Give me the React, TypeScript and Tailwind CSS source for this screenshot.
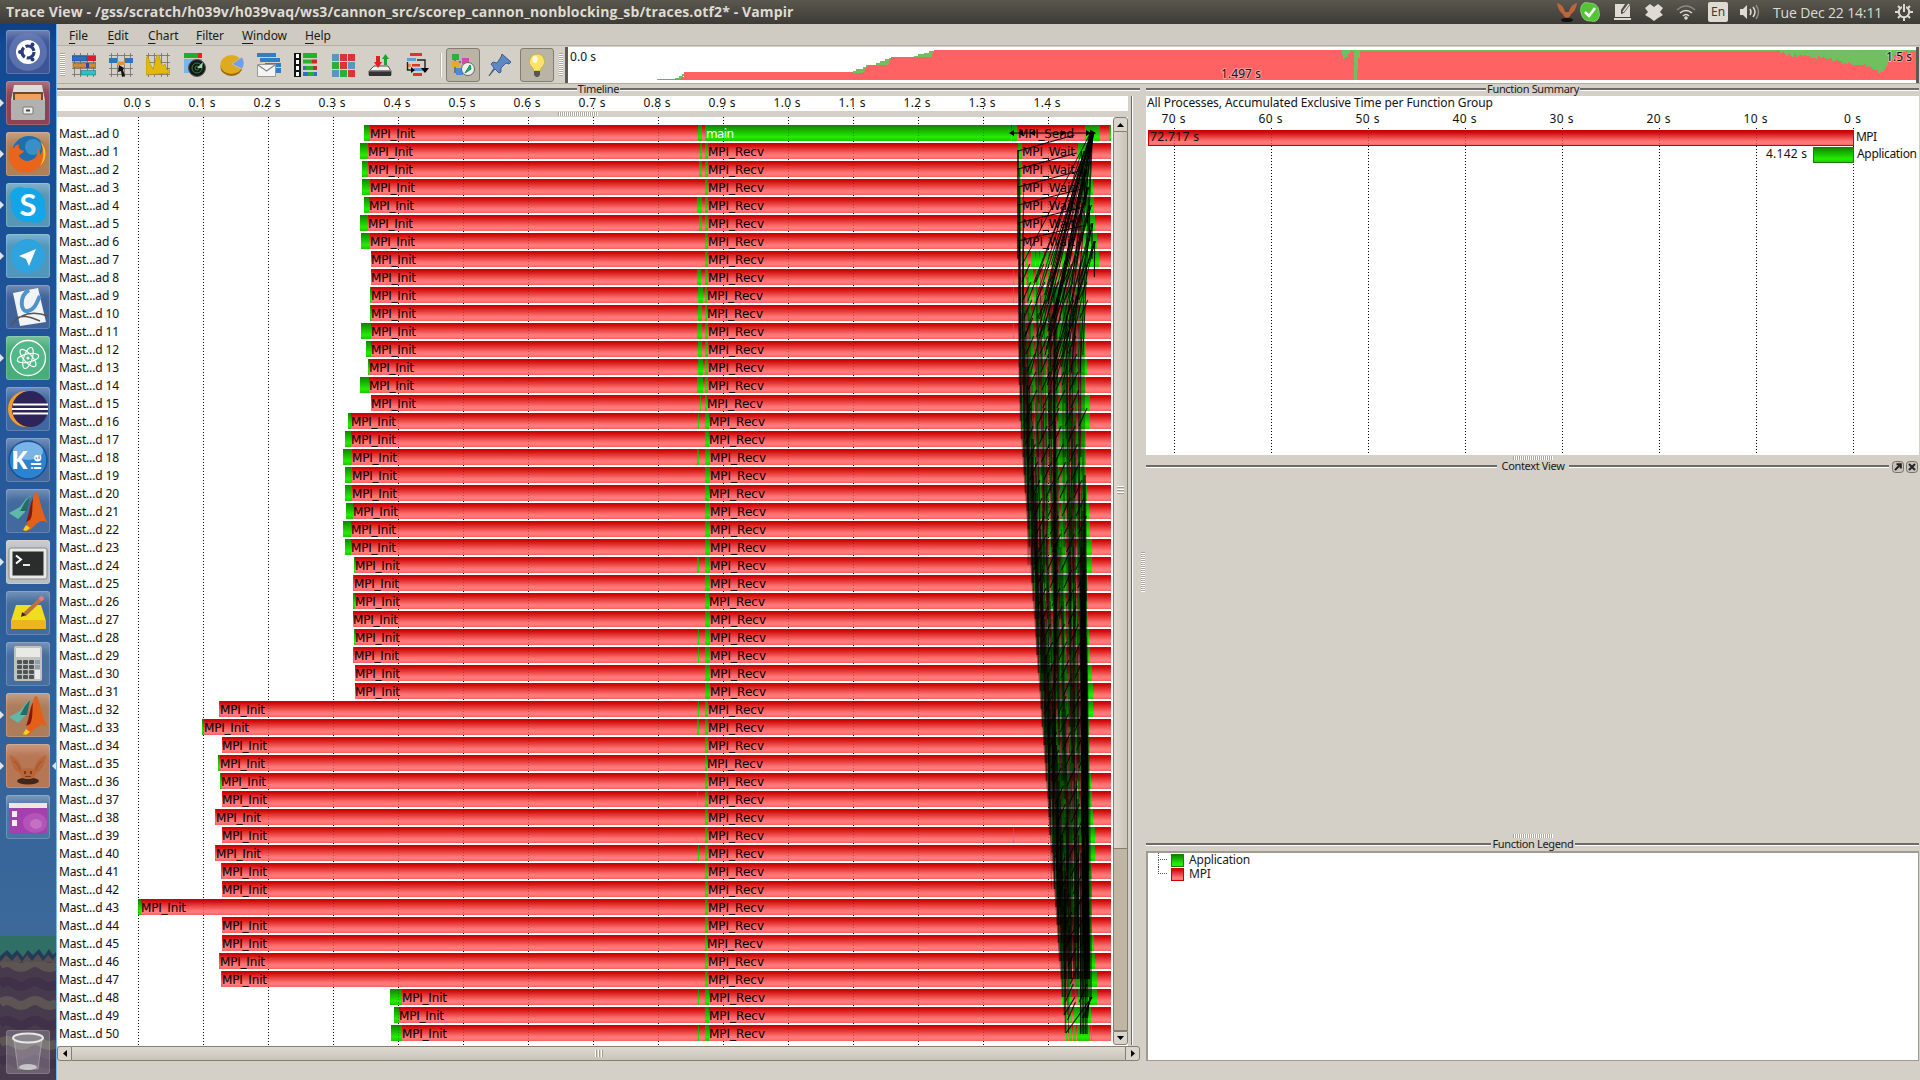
import React from "react";

const UI = "font-['Noto_Sans','Open_Sans',sans-serif]";

/* ---------- deterministic noise for dense trace regions ---------- */
function rng(seed: number) {
  let s = seed;
  return () => {
    s = (s * 1664525 + 1013904223) % 4294967296;
    return s / 4294967296;
  };
}

/* ---------- timeline data: [start, init, midStart, midEnd, recv] ---------- */
const rows: number[][] = [
  [364, 370, 698, 702, 705], [360, 368, 700, 702, 708], [362, 368, 699, 702, 708], [362, 370, 0, 0, 708],
  [364, 369, 697, 702, 708], [360, 368, 699, 702, 708], [361, 370, 0, 0, 708], [371, 371, 0, 0, 708],
  [371, 371, 697, 701, 708], [370, 371, 698, 703, 707], [370, 371, 698, 702, 707], [361, 371, 697, 702, 708],
  [366, 371, 698, 702, 708], [368, 369, 698, 703, 708], [360, 369, 697, 703, 708], [371, 371, 700, 701, 707],
  [348, 351, 698, 699, 709], [345, 351, 0, 0, 709], [343, 352, 697, 699, 710], [345, 352, 0, 0, 710],
  [345, 352, 0, 0, 709], [346, 353, 0, 0, 710], [343, 351, 0, 0, 710], [345, 351, 0, 0, 710],
  [354, 355, 697, 699, 710], [353, 354, 0, 0, 710], [353, 355, 0, 0, 709], [353, 353, 0, 0, 710],
  [354, 355, 698, 699, 710], [353, 354, 698, 699, 710], [355, 355, 0, 0, 710], [355, 355, 0, 0, 710],
  [219, 220, 698, 699, 708], [202, 204, 697, 699, 708], [222, 222, 0, 0, 708], [218, 220, 0, 0, 707],
  [220, 221, 0, 0, 708], [222, 222, 697, 698, 708], [215, 216, 0, 0, 708], [222, 222, 0, 0, 708],
  [215, 216, 698, 699, 708], [221, 222, 0, 0, 708], [222, 222, 0, 0, 708], [138, 141, 0, 0, 708],
  [222, 222, 0, 0, 708], [222, 222, 0, 0, 707], [219, 220, 0, 0, 708], [221, 222, 0, 0, 708],
  [390, 402, 698, 699, 709], [394, 399, 0, 0, 709], [391, 402, 698, 699, 709],
];
const tail = [
  1100, 1089, 1091, 1093, 1094, 1095, 1097, 1099, 1088, 1086, 1085, 1085, 1086, 1087, 1086, 1090, 1090, 1086, 1086,
  1086, 1087, 1089, 1090, 1092, 1092, 1088, 1088, 1088, 1089, 1090, 1092, 1093, 1093, 1089, 1089, 1089, 1091, 1092,
  1093, 1095, 1095, 1092, 1092, 1092, 1092, 1094, 1095, 1097, 1097, 1091, 1092,
];
const leftAt = (r: number) => (r < 16 ? 1018 + r * 0.1 : 1020 + (r - 16) * 1.32);
const rowTop = (r: number) => 125 + 18 * r;
const rowMid = (r: number) => 133 + 18 * r;

function stripes() {
  const out: { x: number; w: number; y: number }[] = [];
  const rand = rng(77);
  for (let r = 7; r < 49; r++) {
    const x0 = Math.round(leftAt(r)) + 2;
    let x = x0;
    while (x < 1082) {
      const w = 1 + Math.floor(rand() * 5);
      out.push({ x, w, y: rowTop(r) });
      x += w + 1 + Math.floor(rand() * 4);
    }
    out.push({ x: 1062, w: 3, y: rowTop(r) });
    out.push({ x: 1082, w: tail[r] - 1082, y: rowTop(r) });
  }
  return out.filter((s) => s.w > 0);
}

type Ln = [number, number, number, number, number, number];
function messages(): Ln[] {
  const L: Ln[] = [];
  const rand = rng(4242);
  // left frontier: a vertical step per receiving rank
  for (let r = 9; r < 51; r++) {
    const from = Math.max(1, r - 7);
    const x = Math.round(leftAt(r)) + 0.5;
    L.push([x, rowMid(from), x, rowMid(r), 1.6, 0.55]);
    L.push([x + 4, rowMid(from) + 18, x + 3, rowMid(r), 1, 0.5]);
  }
  // shallow links between neighbouring ranks
  for (let r = 1; r < 7; r++) {
    L.push([1018, rowMid(r), 1072 + r * 2.4, rowMid(r - 1) + 2, 1.2, 0.95]);
    L.push([1018, rowMid(r) - 1, 1018, rowMid(r) + 18, 1.5, 0.9]);
  }
  // fan converging on rank 0
  for (let k = 0; k < 22; k++) {
    const tx = 1094 - rand() * 4;
    const bx = 1022 + k * 2.9;
    L.push([tx, 133, bx, rowMid(7 + Math.floor(rand() * 7)) + 6, 1, 0.8]);
  }
  for (let r = 1; r < 7; r++) {
    for (let k = 0; k < 4; k++) {
      const tx = 1079 + r * 2.4 + rand() * 3;
      L.push([tx, rowMid(r), tx - 26 - rand() * 24, rowMid(r + 8), 1, 0.75]);
    }
    L.push([1079 + r * 2.6, rowMid(r), 1080 + r * 2.4, rowMid(r + 2), 1.2, 0.85]);
  }
  // steep translucent links, about eight ranks down
  for (let r = 8; r < 45; r++) {
    const a = leftAt(r) + 6;
    const cols = [0.04, 0.16, 0.27, 0.4, 0.47, 0.53, 0.72, 0.8, 0.87, 0.97];
    cols.forEach((c) => {
      const x = Math.round(a + (1080 - a) * c + (rand() - 0.5) * 6) + 0.5;
      const to = Math.min(47, r + 4 + Math.floor(rand() * 5));
      L.push([x, rowMid(r), x + Math.round((1 - c) * 2), rowMid(to), rand() > 0.5 ? 2 : 1, 0.3]);
    });
    if (r < 34) {
      L.push([1053.5 + Math.floor(rand() * 3), rowMid(r), 1054.5, rowMid(r + 4), 2, 0.4]);
    }
  }
  // short diagonals stepping one rank up
  for (let r = 8; r < 50; r++) {
    const off = (r % 8) * 0.9;
    for (let x = leftAt(r) + 3 + off; x < 1080; x += 14) {
      L.push([x, rowMid(r) + 5, x + 8, rowMid(r - 1) + 5, 1.1, 0.8]);
    }
  }
  // dense right-hand bundle
  for (let r = 19; r < 43; r++) {
    const n = r > 24 ? 4 : 2;
    for (let k = 0; k < n; k++) {
      const x = 1080 + rand() * 6 + (r - 24) * 0.13;
      L.push([x, rowMid(r), x + 1.2, rowMid(Math.min(47, r + 7)), 1.6, 0.5]);
    }
  }
  for (let k = 0; k < 5; k++) {
    L.push([1081 + k * 1.6, rowMid(40), 1080.5 + k * 1.6, rowMid(50) + 1, 1.2, 0.85]);
    L.push([1092 - k * 0.6, rowMid(48), 1082 + k * 1.4, rowMid(49) + 3, 1, 0.85]);
  }
  L.push([1092, rowMid(48), 1066, rowMid(50), 1.1, 0.9]);
  L.push([1075, rowMid(48), 1064, rowMid(49), 1.1, 0.9]);
  return L;
}
const GREEN = stripes();
const LINES = messages();

function Label({ x, y, w, t, fill = "#000" }: { x: number; y: number; w: number; t: string; fill?: string }) {
  return (
    <text x={x} y={y} textLength={w} fill={fill} fontSize="12" fontFamily="'DejaVu Sans', sans-serif">
      {t}
    </text>
  );
}

function TimelineChart() {
  return (
    <svg width="1056" height="929" viewBox="57 117 1056 929" className="block shrink-0 bg-white">
      <defs>
        <linearGradient id="red" x1="0" y1="0" x2="0" y2="1">
          <stop offset="0" stopColor="#cc0000" />
          <stop offset="0.12" stopColor="#d00808" />
          <stop offset="0.72" stopColor="#ff7676" />
          <stop offset="0.85" stopColor="#ff7a7a" />
          <stop offset="1" stopColor="#f65f5f" />
        </linearGradient>
        <linearGradient id="green" x1="0" y1="0" x2="0" y2="1">
          <stop offset="0" stopColor="#128200" />
          <stop offset="0.75" stopColor="#22ee00" />
          <stop offset="1" stopColor="#1fc800" />
        </linearGradient>
      </defs>
      <g shapeRendering="crispEdges">
        {Array.from({ length: 15 }, (_, k) => (
          <line key={k} x1={138.5 + 65 * k} x2={138.5 + 65 * k} y1="117" y2="1046" stroke="#000" strokeDasharray="1 2" />
        ))}
        {rows.map((d, r) => (
          <g key={r}>
            <rect x={d[0]} y={rowTop(r)} width={1111 - d[0]} height="16" fill="url(#red)" />
            <rect x={d[0]} y={rowTop(r)} width={d[1] - d[0]} height="16" fill="url(#green)" />
            {d[2] > 0 && <rect x={d[2]} y={rowTop(r)} width={d[3] - d[2]} height="16" fill="url(#green)" />}
            <rect x="705" y={rowTop(r)} width={r === 0 ? 306 : d[4] - 705} height="16" fill="url(#green)" />
          </g>
        ))}
        <rect x="1012" y="125" width="5" height="16" fill="url(#green)" />
        <rect x="1085" y="125" width="15" height="16" fill="url(#green)" />
        <rect x="1109" y="125" width="2" height="16" fill="url(#green)" />
        {[1, 2, 3, 4, 5, 6].map((r) => (
          <g key={r} fill="url(#green)">
            <rect x="1018" y={rowTop(r)} width="4" height="16" />
            <rect x={1077 + r} y={rowTop(r)} width={tail[r] - 1077 - r} height="16" />
          </g>
        ))}
        {[8, 9, 11, 39].map((r) => (
          <rect key={r} x="1013" y={rowTop(r)} width="1" height="16" fill="url(#green)" />
        ))}
        {GREEN.map((s, i) => (
          <rect key={i} x={s.x} y={s.y} width={s.w} height="16" fill="url(#green)" />
        ))}
        <g fill="url(#green)">
          <rect x="1066" y={rowTop(49)} width="2" height="16" />
          <rect x="1070" y={rowTop(49)} width="2" height="16" />
          <rect x="1074" y={rowTop(49)} width="17" height="16" />
          <rect x="1066" y={rowTop(50)} width="2" height="16" />
          <rect x="1069" y={rowTop(50)} width="3" height="16" />
          <rect x="1073" y={rowTop(50)} width="3" height="16" />
          <rect x="1077" y={rowTop(50)} width="13" height="16" />
          <rect x="1091" y={rowTop(50)} width="1" height="16" />
        </g>
        {Array.from({ length: 15 }, (_, k) => (
          <line key={k} x1={138.5 + 65 * k} x2={138.5 + 65 * k} y1="117" y2="1046" stroke="#400" strokeOpacity="0.3" strokeDasharray="1 2" />
        ))}
      </g>
      {rows.map((d, r) => (
        <g key={r}>
          <text x="59" y={rowTop(r) + 13} textLength="60" fontSize="12" fill="#111" fontFamily="'Noto Sans', sans-serif">
            {r < 10 ? `Mast...ad ${r}` : `Mast...d ${r}`}
          </text>
          <Label x={d[1]} y={rowTop(r) + 13} w={45} t="MPI_Init" />
          {r > 0 && <Label x={d[4]} y={rowTop(r) + 13} w={56} t="MPI_Recv" />}
          {r > 0 && r < 7 && <Label x={1022} y={rowTop(r) + 13} w={53} t="MPI_Wait" />}
        </g>
      ))}
      <Label x={706} y={138} w={28} t="main" fill="#fff" />
      <Label x={1018} y={138} w={56} t="MPI_Send" />
      {/* overlapping message bundles */}
      <path fill="#000" fillOpacity="0.28" d="M1022 313L1084 259L1086 547L1092 997L1062 997L1042 727L1021 439Z" />
      <path fill="#000" fillOpacity="0.3" d="M1083 430L1086 547L1092 900V997H1080V550Z" />
      <g stroke="#000">
        {LINES.map((l, i) => (
          <line key={i} x1={l[0]} y1={l[1]} x2={l[2]} y2={l[3]} strokeWidth={l[4]} strokeOpacity={l[5]} />
        ))}
        <line x1="1011" x2="1094" y1="133" y2="133" />
      </g>
      <path d="M1009 133l5-3v6zM1018 133l5-3v6zM1030 133l5-3v6zM1066 133l-5-3v6zM1096 133l-6-3.5v7zM1091 133l-5-3v6z" />
    </svg>
  );
}

/* ---------- small chrome pieces ---------- */
function DockTitle({ t, lead, w, buttons }: { t: string; lead: string; w: string; buttons?: boolean }) {
  return (
    <div className="flex h-3 items-start text-[11px] leading-[10px] text-[#1a1a1a]">
      <div className={`mt-[4px] h-[3px] border-t-2 border-b border-t-[#6b6a66] border-b-white ${lead}`} />
      <div className={`flex justify-center whitespace-nowrap tracking-[-0.35px] ${w}`}>{t}</div>
      <div className="mt-[4px] h-[3px] flex-1 border-t-2 border-b border-t-[#6b6a66] border-b-white" />
      {buttons && (
        <div className="ml-[3px] mr-px flex gap-[2px]">
          <svg width="12" height="12" viewBox="0 0 12 12"><rect x=".5" y=".5" width="11" height="11" rx="3" fill="#c9c4b8" stroke="#77736a" /><path d="M3 9l4.5-4.5M4.5 3.2h4.3v4.3" stroke="#222" strokeWidth="2" fill="none" /></svg>
          <svg width="12" height="12" viewBox="0 0 12 12"><rect x=".5" y=".5" width="11" height="11" rx="3" fill="#c9c4b8" stroke="#77736a" /><path d="M3 3l6 6M9 3l-6 6" stroke="#222" strokeWidth="2" fill="none" /></svg>
        </div>
      )}
    </div>
  );
}
const GRIP_H = "h-[4px] w-10 bg-[repeating-linear-gradient(90deg,#aaa69a_0_1px,#fff_1px_2px)]";
const GRIP_V = "bg-[repeating-linear-gradient(180deg,#aaa69a_0_1px,#fff_1px_2px)]";

/* ---------- toolbar icons ---------- */
const grid = <path d="M2.500 0v24M8.500 0v24M15.500 0v24M21.500 0v24M0 2.500h24M0 9.500h24M0 15.500h24M0 21.500h24" stroke="#6f6c65" strokeWidth=".8" fill="none" />;
const toolIcons: React.ReactNode[] = [
  <>{grid}<path fill="#2e6fc6" stroke="#1f3f78" strokeWidth=".5" d="M0 3h15v5H0z" /><path fill="#d81f2c" d="M15 3h9v5h-9z" /><path fill="#c98a3a" stroke="#7a4f18" strokeWidth=".5" d="M1 10.500h23v4H1z" /><path fill="#234b9a" d="M14 10h3v5h-3z" /><path fill="#35bcc8" stroke="#0d6f78" strokeWidth=".5" d="M9 17.500h15v4.500H9z" /></>,
  <>{grid}<path fill="#2e74bf" d="M0 5h8v5H0zM16 5h8v5h-8z" /><path fill="#e0953c" d="M8 8.500h8v3.500H8z" /><path fill="#111" d="M10 12l5 3-1 2 2 6-3 1-1-6-3 1z" /></>,
  <>{grid}<path fill="#e4b90e" stroke="#b48c00" strokeWidth=".6" d="M0 22V5l2-2 2 8 3 5 2-7 2-7h2l2 8 2 3 2-2 2 6h3v3z" /></>,
  <><path fill="#1fae2c" d="M1 0h18v5H1z" /><path fill="#d92626" d="M15 0h4v5h-4z" /><path fill="#7ab4e8" d="M1 6h18v14H1z" /><circle cx="14" cy="15" r="8.500" fill="#111b14" stroke="#555" /><circle cx="14" cy="15" r="5" fill="none" stroke="#4a8a5a" strokeWidth=".8" /><circle cx="14" cy="15" r="2" fill="none" stroke="#4a8a5a" strokeWidth=".8" /><path d="M14 15l6-6-1 6z" fill="#9fd8b0" /></>,
  <><ellipse cx="11.500" cy="14" rx="11" ry="9" fill="#9a6a05" /><ellipse cx="11.500" cy="11.500" rx="11" ry="9.500" fill="#e0aa20" /><path d="M12 11l10-7q4 6 0 12z" fill="#6f9ef0" stroke="#d4d0c8" strokeWidth=".6" /></>,
  <><path fill="#2f7fc6" d="M0 0h19v4H0zM3 5h20v4H3zM8 10h16v4H8zM18 15h6v5h-6z" /><path fill="#f4f4f4" stroke="#999" d="M.5 11.500h18v12H.5z" /><path d="M1 12l8.500 6L18 12" fill="none" stroke="#888" strokeWidth="1.300" /></>,
  <><path fill="#111" d="M0 0h7v24H0z" /><path fill="#fff" d="M2 1h3v4H2zM2 7h3v4H2zM2 13h3v4H2zM2 19h3v4H2z" /><path fill="#23b32a" d="M9 0h14v5H9zM9 6.500h9v4H9zM12 13h7v4h-7zM14 19h6v4h-6z" /><path fill="#c92a2a" d="M18 6.500h5v4h-5zM19 13h4v4h-4z" /><path fill="#2f6fd0" d="M9 13h3v4H9zM9 19h5v4H9zM20 19h3v4h-3z" /></>,
  <><path fill="#5c94c4" d="M1 1h7v7H1zM17 9h7v7h-7zM1 17h7v7H1z" /><path fill="#d83535" d="M9 1h7v7H9zM17 1h7v7h-7zM9 9h7v7H9zM17 17h7v7h-7z" /><path fill="#2cae38" d="M1 9h7v7H1zM9 17h7v7H9z" /></>,
  <><path fill="#f0f0ee" stroke="#555" d="M6 13h14l3 5v4H1v-4z" /><path fill="#333" d="M1 18h22v5H1z" /><path fill="#888" d="M1 17h22v1.500H1z" /><path fill="#d22" d="M8 3h4v6h2l-4 6-4-6h2z" /><path fill="#1fa32c" d="M16 12V6h-2l3.500-5L21 6h-2v6z" /></>,
  <><path fill="#d33" d="M5 0h12v3H5zM7 11h8v2.500H7z" /><path fill="#5ba0d8" d="M2 5h9v3H2zM9 15h9v3H9z" /><path fill="#e0953c" d="M2 11h4v3H2z" /><path fill="#d33" d="M8 20h9v3H8z" /><path d="M12 7h8v10M2.500 9v8h4" fill="none" stroke="#222" strokeWidth="1.400" /><path d="M16 15h8l-4 5zM6 14v6l4-3z" /></>,
];
const treeIcon = <><path d="M4 2v18M4 9h6" stroke="#333" /><path fill="#2eae3a" d="M1 1h7v6H1z" /><path fill="#e8a830" d="M1 8h7v6H1z" /><path fill="#4a8ad8" d="M5 15h7v7H5z" /><path fill="#d04ab0" d="M11 5h7v6h-7z" /><circle cx="17" cy="16" r="6.500" fill="#eee" stroke="#666" /><path d="M14 20l5-8 1 4z" fill="#2b4" stroke="#186" /></>;
const pinIcon = <path fill="#5d88c4" stroke="#2d4a7a" strokeWidth=".8" d="M14 1l9 8-2 2-3-1-5 5v4l-2 1-4-4-6 7 5-8-3-4 2-2 4 1 4-6z" />;
const bulbIcon = <><path fill="#fbe36a" stroke="#c9a62c" strokeWidth=".8" d="M12 1a7.500 7.500 0 0 1 4.500 13.500L15 18H9l-1.500-3.500A7.500 7.500 0 0 1 12 1z" /><ellipse cx="10" cy="6.500" rx="2.500" ry="3.500" fill="#fffbe0" /><path fill="#555" d="M9 18h6v4l-2 2h-2l-2-2z" /></>;

function Ico({ children }: { children: React.ReactNode }) {
  return <svg width="24" height="24" viewBox="0 0 24 24" className="block">{children}</svg>;
}

/* ---------- launcher ---------- */
const matlab = <><path fill="#5fb8a8" d="M3 24l11-6 6-8 5-4-6 17-7 7z" /><path fill="#1f6f68" d="M14 22l5-9 5-6-3 15z" /><path fill="#e2601a" d="M18 41c4-3 3-12 7-22 2-8 3-17 5-16 3 0 6 23 12 31-6-5-11 0-16 5-3 3-5 3-8 2z" /><path fill="#8b1508" d="M20 33c3-6 3-15 7-24-1 10 0 17-3 22z" /><path fill="#f9d018" d="M17 41l3-5 4 3-4 3z" /></>;
type App = { bg: string; art: React.ReactNode; run?: boolean; active?: boolean };
const apps: App[] = [
  { bg: "bg-[#3c5598]", art: <><circle cx="22" cy="22" r="19" fill="#6f83bd" opacity=".6" /><circle cx="22" cy="22" r="12" fill="#fff" /><circle cx="22" cy="22" r="6" fill="none" stroke="#2b3d78" strokeWidth="3.200" strokeDasharray="10.500 2" /><circle cx="14" cy="22" r="2" fill="#2b3d78" /><circle cx="26.500" cy="14.500" r="2" fill="#2b3d78" /><circle cx="26.500" cy="29.500" r="2" fill="#2b3d78" /></> },
  { bg: "bg-[#8e4355]", run: true, art: <><path fill="#dcdcda" d="M8 4h28l3 16H5z" /><rect x="7" y="11" width="30" height="10" fill="#6b4a32" /><path fill="#f0a060" d="M9 13h26v7H9z" /><rect x="5" y="19" width="34" height="20" rx="1" fill="#b1b1b0" /><rect x="17" y="26" width="10" height="7" rx="1" fill="#eee" stroke="#777" /><path d="M20 29.500h4" stroke="#444" strokeWidth="2" /></> },
  { bg: "bg-[#b08057]", run: true, art: <><circle cx="23" cy="21" r="17" fill="#1f6fae" /><circle cx="27" cy="15" r="8" fill="#4aa6d8" opacity=".6" /><path fill="#e9641c" d="M5 12c0 3 0 4 3 4 2-4 4-3 5-4-1 4 1 6 5 7-1 3-5 3-5 5 3 5 9 7 16 2 3-3 3-8 1-11 5 4 4 9 5 7 3-7 2-11-1-14 9 7 8 20 0 27S12 43 6 34 3 18 5 12z" /><path fill="#f9c52c" d="M34 9c8 8 7 19 0 25 4-6 5-16 0-25z" /></> },
  { bg: "bg-[#5597b4]", run: true, art: <><circle cx="22" cy="22" r="17" fill="#12a5e8" /><circle cx="14" cy="14" r="10" fill="#12a5e8" /><circle cx="30" cy="30" r="10" fill="#12a5e8" /><text x="22" y="33" textAnchor="middle" fontSize="31" fontWeight="bold" fill="#fff" fontFamily="Lato, sans-serif">S</text></> },
  { bg: "bg-[#4f97bc]", run: true, art: <><circle cx="22" cy="22" r="17" fill="#2fa3dd" /><path fill="#fff" d="M13 22l17-7-7 17-3-7z" /></> },
  { bg: "bg-[#3f629b]", art: <><path fill="#f2f3f4" d="M7 8l25-5 8 34-26 4z" /><path d="M23 5c-10 6-9 23-1 21s9-10 12-15" fill="none" stroke="#4c94c9" strokeWidth="4" /><path d="M5 40c8-10 20-15 37-9M9 34c8-6 19 0 25 2" fill="none" stroke="#555" strokeWidth="1.500" /></> },
  { bg: "bg-[#48ad78]", run: true, art: <><circle cx="22" cy="22" r="17.500" fill="#54b98a" stroke="#fff" strokeWidth="1.300" /><g fill="none" stroke="#fff" strokeWidth="1.100"><ellipse cx="22" cy="22" rx="11" ry="4.200" transform="rotate(-12 22 22)" /><ellipse cx="22" cy="22" rx="11" ry="4.200" transform="rotate(48 22 22)" /><ellipse cx="22" cy="22" rx="11" ry="4.200" transform="rotate(108 22 22)" /></g><circle cx="22" cy="22" r="1.600" fill="#fff" /></> },
  { bg: "bg-[#3f67a0]", art: <><circle cx="20" cy="22" r="18" fill="#f29a2b" /><circle cx="24" cy="22" r="18" fill="#2e2459" /><path d="M7 17.500h35M6 22h36M7 26.500h35" stroke="#fff" strokeWidth="2" /></> },
  { bg: "bg-[#41699f]", art: <><circle cx="22" cy="22" r="19" fill="#2b84d2" stroke="#1a4f96" strokeWidth="1.500" /><ellipse cx="22" cy="13" rx="15" ry="9" fill="#9cc9ee" opacity=".7" /><text x="5" y="31" fontSize="25" fontWeight="bold" fill="#fff" fontFamily="'Open Sans', sans-serif">K</text><text x="0" y="0" transform="translate(35 32) rotate(-90)" fontSize="13" fontWeight="bold" fill="#fff" fontFamily="'Open Sans', sans-serif">ile</text></> },
  { bg: "bg-[#426a9e]", art: matlab },
  { bg: "bg-[#b9bcc1]", run: true, art: <><rect x="3" y="8" width="38" height="31" rx="2" fill="#e8e8e6" stroke="#888" /><rect x="6.500" y="11.500" width="31" height="24" fill="#2b2d2c" /><path d="M10 15.500l5 4-5 4" stroke="#fff" strokeWidth="2" fill="none" /><path d="M17 25h7" stroke="#fff" strokeWidth="1.800" /></> },
  { bg: "bg-[#446c9e]", art: <><path fill="#f0dd20" d="M10 14h25l5 16H5z" /><path fill="#efb51f" d="M5 29h35v9H5z" /><path d="M18 24L35 8" stroke="#b9733a" strokeWidth="4" /><path d="M34 9l3-3" stroke="#e87a7a" strokeWidth="4.500" /><path fill="#3a2a1a" d="M15 26l1-5 4 3z" /></> },
  { bg: "bg-[#466e9f]", art: <><rect x="8" y="4" width="28" height="35" rx="2" fill="#bfc2bf" /><rect x="10" y="6" width="24" height="9" fill="#e9eae6" />{[18, 23, 28, 33].map((y) => [11, 17, 23].map((x) => <rect key={`${x}-${y}`} x={x} y={y} width="5" height="4" rx="1" fill="#4e5355" />))}<path fill="#8fa0ac" d="M29 18h5v4h-5zM29 23h5v4h-5z" /><path fill="#e8ebee" d="M29 28h5v9h-5z" /></> },
  { bg: "bg-[#ad7d5b]", run: true, art: matlab },
  { bg: "bg-[#b77654]", run: true, active: true, art: <><ellipse cx="22" cy="37" rx="11" ry="3.500" fill="#2b1a12" opacity=".85" /><path fill="#b9653a" d="M4 11c5 2 10 6 12 14 3-1 9-1 12 0 2-8 7-12 12-14-1 10-5 16-10 18-1 5-3 6-8 6s-7-1-8-6C9 27 5 21 4 11z" /><path stroke="#96502b" strokeWidth="1" fill="none" d="M8 17c3 2 5 5 6 9M36 17c-3 2-5 5-6 9" /><path fill="#7a3a1c" d="M18 27h2v3h-2zM24 27h2v3h-2zM19 32h6v1h-6z" /></> },
  { bg: "bg-[#4a75a3]", art: <><rect x="3" y="8" width="38" height="31" rx="2" fill="#a53fae" /><ellipse cx="29" cy="28" rx="12" ry="10" fill="#cf7acb" opacity=".35" /><ellipse cx="30" cy="29" rx="6" ry="5" fill="#e29ad8" opacity=".4" /><path fill="#eee8da" d="M3 8h38v5H3z" /><path fill="#f4eef4" d="M6 16h5v6H6zM6 25h5v6H6z" /></> },
];

function Tile({ app }: { app: App }) {
  return (
    <div className="flex h-[44px] w-[56px] items-center">
      <div className="w-[6px]">
        {app.run && <svg width="4" height="8" viewBox="0 0 4 8"><path d="M0 0l4 4-4 4z" fill="#dfe4ea" /></svg>}
      </div>
      <div className={`h-[44px] w-[44px] rounded-[3px] shadow-[inset_0_0_0_1px_rgba(255,255,255,0.18),inset_0_12px_10px_-6px_rgba(255,255,255,0.28)] ${app.bg}`}>
        <svg width="44" height="44" viewBox="0 0 44 44">{app.art}</svg>
      </div>
      {app.active && <svg className="ml-[2px]" width="4" height="8" viewBox="0 0 4 8"><path d="M4 0L0 4l4 4z" fill="#dfe4ea" /></svg>}
    </div>
  );
}

function Launcher() {
  const waves = [965, 984, 1003, 1023, 1043, 1062];
  return (
    <aside className="relative h-[1056px] w-[57px] shrink-0 overflow-hidden bg-[linear-gradient(#0d3f86_0px,#124a93_20px,#24579a_400px,#3c699a_912px)]">
      <svg className="absolute bottom-0 left-0" width="57" height="144" viewBox="0 936 57 144">
        <rect x="0" y="936" width="57" height="144" fill="#473a4c" />
        {waves.map((y, i) => (
          <path key={y} d={`M0 ${y}q7-5 14 0t14 0 14 0 15 0`} stroke={i % 2 ? "#403048" : "#5c5553"} strokeWidth="9" fill="none" />
        ))}
        <path fill="#55504f" d="M0 944h57v18H0z" />
        <path fill="#253a55" d="M0 944h57v10l-4 6-5-5-5 6-5-7-6 7-5-6-5 7-5-7-5 6-6-6-6 7z" />
        <path fill="#2f6f66" d="M0 936h57v15l-4 4-4-6-5 7-5-7-6 6-5-5-5 7-6-7-5 5-5-5-7 6z" />
      </svg>
      <div className="relative flex h-full flex-col gap-[7px] pt-[6px]">
        {apps.map((a, i) => <Tile key={i} app={a} />)}
        <div className="mt-auto mb-[6px] ml-[6px] h-[44px] w-[44px] rounded-[3px] bg-white/20 shadow-[inset_0_0_0_1px_rgba(255,255,255,0.15)]">
          <svg width="44" height="44" viewBox="0 0 44 44"><path d="M8 9h28l-4 30H12z" fill="#fff" fillOpacity=".15" stroke="#ddd" strokeOpacity=".4" /><ellipse cx="22" cy="8" rx="15" ry="4.500" fill="#8b858c" stroke="#e8e8e8" strokeWidth="2" /><ellipse cx="22" cy="37" rx="9" ry="3" fill="#d8d8d8" opacity=".8" /></svg>
        </div>
      </div>
      <div className="absolute right-0 top-0 h-full w-px bg-[#79b8ee]" />
    </aside>
  );
}

/* ---------- overview strip ---------- */
function Overview() {
  const rand = rng(9);
  const anchors = [[1779, 51], [1788, 55], [1827, 58], [1851, 64], [1871, 66], [1881, 74], [1886, 70], [1891, 60], [1901, 53], [1916, 51]];
  let d = "M1342 50H1916V51";
  for (let x = 1914; x > 1779; x -= 2) {
    let i = anchors.findIndex((a) => a[0] >= x);
    if (i < 1) i = 1;
    const [x0, y0] = anchors[i - 1];
    const [x1, y1] = anchors[i];
    const y = y0 + ((y1 - y0) * (x - x0)) / (x1 - x0) + (rand() - 0.5) * 3;
    d += `H${x}V${Math.max(51, Math.round(y))}`;
  }
  d += "V51H1360V58H1358V70H1357V80H1354V51H1350V54H1348V57H1345V59H1343Z";
  const halo = { paintOrder: "stroke" as const };
  return (
    <svg width="1354" height="36" viewBox="565 47 1354 36" className="block shrink-0 bg-white" shapeRendering="crispEdges">
      <path fill="#ff6262" d="M657 80V79H680V77H684V72H862L868 65H888L891 57H930L934 50H1916V80Z" />
      <path fill="#70c060" d="M657 80v-1h2v1zM675 79v-1h4v-2h3v-2h2v-2v3l-3 4zM853 73v-2h3v-2h7v-2h3v-2h2l-5 8zM876 65v-2h4v-2h5v-2h4v-1h2l-3 7zM914 57v-1h4v-2h6v-1h5v-2h4l-1 6z" />
      <path fill="#70c060" d={d} />
      <path fill="#5c5a56" d="M565 47h3v36h-3zM1916 47h3v36h-3z" />
      <g fontSize="12" fontFamily="'Noto Sans', sans-serif" fill="#111" shapeRendering="auto">
        <text x="570" y="61" textLength="26">0.0 s</text>
        <g stroke="#ffc9c4" strokeWidth="2" strokeOpacity=".6" style={halo}>
          <text x="1221" y="78" textLength="40">1.497 s</text>
          <text x="1886" y="61" textLength="26">1.5 s</text>
        </g>
      </g>
    </svg>
  );
}

function SummaryChart() {
  return (
    <svg width="773" height="359" viewBox="1146 96 773 359" className="block bg-white">
      <g shapeRendering="crispEdges">
        {Array.from({ length: 8 }, (_, k) => (
          <line key={k} x1={1174.5 + 97 * k} x2={1174.5 + 97 * k} y1="128" y2="453" stroke="#000" strokeDasharray="1 2" />
        ))}
        <rect x="1148.500" y="130.500" width="705" height="15" fill="url(#red)" stroke="#cc0000" />
        <rect x="1813.500" y="147.500" width="40" height="15" fill="url(#green)" stroke="#128200" />
        {Array.from({ length: 7 }, (_, k) => (
          <line key={k} x1={1174.5 + 97 * k} x2={1174.5 + 97 * k} y1="131" y2="145" stroke="#400" strokeOpacity=".35" strokeDasharray="1 2" />
        ))}
      </g>
      <g fontSize="12" fill="#111" fontFamily="'Noto Sans', sans-serif">
        <text x="1147" y="107" textLength="346">All Processes, Accumulated Exclusive Time per Function Group</text>
        {Array.from({ length: 8 }, (_, k) => (
          <text key={k} x={k === 7 ? 1844 : 1161.5 + 97 * k} y="123" textLength={k === 7 ? 17 : 24}>{`${k === 7 ? "" : 7 - k}0 s`}</text>
        ))}
        <text x="1150" y="141" textLength="49">72.717 s</text>
        <text x="1856" y="141" textLength="21">MPI</text>
        <text x="1766" y="158" textLength="41">4.142 s</text>
        <text x="1857" y="158" textLength="60">Application</text>
      </g>
    </svg>
  );
}

const menus = [["F", "ile", "w-[38.500px]"], ["E", "dit", "w-[40.500px]"], ["C", "hart", "w-[48px]"], ["F", "ilter", "w-[46px]"], ["W", "indow", "w-[63px]"], ["H", "elp", "w-[40px]"]];
const legend = [
  ["Application", "border-[#128200] bg-[linear-gradient(#128200,#22ee00_80%)]"],
  ["MPI", "border-[#cc0000] bg-[linear-gradient(#cc0000,#ff7a7a_80%)]"],
];
const SB = "border border-[#857f70] bg-[#d9d5cc]";

export default function App() {
  return (
    <div className={`flex h-[1080px] w-[1920px] flex-col overflow-hidden bg-[#d4d0c8] text-[12px] text-[#1a1a1a] ${UI}`}>
      <header className="flex h-6 shrink-0 items-center justify-between bg-[linear-gradient(#5a574e,#3d3b36)] pl-[6px] pr-[7px] text-[#dfdbd2]">
        <div className="whitespace-nowrap font-['Open_Sans'] text-[14px] font-bold leading-6 tracking-[0.12px]">
          Trace View - /gss/scratch/h039v/h039vaq/ws3/cannon_src/scorep_cannon_nonblocking_sb/traces.otf2* - Vampir
        </div>
        <div className="flex items-center">
          <svg width="22" height="20" viewBox="0 0 22 20"><ellipse cx="11" cy="18" rx="6" ry="2" fill="#111" /><path fill="#c0653a" d="M1 1c4 1 7 4 8 9h4c1-5 4-8 8-9-1 6-3 9-6 11-1 5-7 5-8 0C4 10 2 7 1 1z" /></svg>
          <svg className="ml-px" width="22" height="22" viewBox="0 0 22 22"><path fill="#52c436" stroke="#a9e59a" strokeWidth=".6" d="M2 6q2-6 8-4 9 0 10 8 1 4 0 6-2 6-8 4-8 1-10-8-1-3 0-6z" /><path d="M6 11l4 4 6-8" stroke="#fff" strokeWidth="2.500" fill="none" /></svg>
          <svg className="ml-[13px]" width="17" height="18" viewBox="0 0 17 18"><path fill="#dfdbd2" d="M1 1h10L7 7v4l3-1 6-8v12H1zM0 15h17v2H0z" /><path d="M15 1L9 9" stroke="#dfdbd2" strokeWidth="1.500" /></svg>
          <svg className="ml-[14px]" width="18" height="17" viewBox="0 0 18 17"><path fill="#dfdbd2" d="M5 0l4 3 4-3 5 4-3 4 3 3-5 3-4 3-4-3-5-3 3-3-3-4z" /></svg>
          <svg className="ml-[13px]" width="20" height="15" viewBox="0 0 20 15" fill="none" strokeWidth="1.600"><path d="M1 5q9-8 18 0" stroke="#8d8a82" /><path d="M4 8q6-5 12 0M7 11q3-3 6 0" stroke="#dfdbd2" /><circle cx="10" cy="13" r="1" stroke="#dfdbd2" /></svg>
          <div className="ml-[12px] flex h-[20px] w-[20px] items-center justify-center rounded-[2px] bg-[#dfdbd2] text-[12px] text-[#3c3b37]">En</div>
          <svg className="ml-[12px]" width="20" height="16" viewBox="0 0 20 16"><path fill="#dfdbd2" d="M0 5h3l4-4v14l-4-4H0z" /><path d="M10 5q2 3 0 6M13 3q4 5 0 10" stroke="#dfdbd2" strokeWidth="1.500" fill="none" /><path d="M16 1q5 7 0 14" stroke="#8d8a82" strokeWidth="1.500" fill="none" /></svg>
          <div className="ml-[13px] w-[111px] whitespace-nowrap font-['Open_Sans'] text-[14px] tracking-[-0.15px]">Tue Dec 22 14:11</div>
          <svg className="ml-[11px]" width="18" height="18" viewBox="0 0 18 18" fill="none" stroke="#dfdbd2"><circle cx="9" cy="9" r="5.200" strokeWidth="2" /><path d="M9 15v3M0 9h3M15 9h3M3 3l2 2M15 3l-2 2M3 15l2-2M15 15l-2-2" strokeWidth="2" /><path d="M9 1v8" stroke="#4b4942" strokeWidth="4" /><path d="M9 1v8" strokeWidth="2" /></svg>
        </div>
      </header>

      <div className="flex flex-1">
        <Launcher />
        <main className="flex w-[1863px] flex-col">
          <nav className="flex h-[22px] items-center border-b border-[#b5b0a3] bg-[#cfcbc3] pl-3 pt-[2px] leading-[18px]">
            {menus.map(([a, b, w]) => (
              <div key={a + b} className={`${w} whitespace-nowrap text-[12px] tracking-[-0.1px]`}>
                <span className="underline underline-offset-[3px]">{a}</span>{b}
              </div>
            ))}
          </nav>
          <div className="flex h-[38px] items-center border-b border-[#b0aca0]">
            <div className={`ml-[3px] h-[23px] w-[5px] ${GRIP_V}`} />
            <div className="ml-[7px] flex gap-[13px]">
              {toolIcons.map((ic, i) => <Ico key={i}>{ic}</Ico>)}
            </div>
            <div className="ml-[11px] h-6 w-[2px] border-l border-[#bbb7ab] bg-white" />
            <div className="ml-[4px] flex h-[34px] w-[34px] items-center justify-center rounded-[3px] border border-[#837d6f] bg-[#bab4a6]"><Ico>{treeIcon}</Ico></div>
            <div className="mx-[8px]"><Ico>{pinIcon}</Ico></div>
            <div className="flex h-[34px] w-[34px] items-center justify-center rounded-[3px] border border-[#837d6f] bg-[#bab4a6]"><Ico>{bulbIcon}</Ico></div>
            <div className={`ml-[5px] mr-[2px] h-[23px] w-[4px] ${GRIP_V}`} />
            <Overview />
          </div>

          <div className="flex flex-1">
            {/* timeline dock */}
            <section className="flex w-[1083px] flex-col">
              <DockTitle t="Timeline" lead="w-[520px]" w="w-[43px]" />
              <div className="flex">
                <div className="flex w-[1071px] flex-col">
                  <svg width="1071" height="15" viewBox="57 96 1071 15" className="block overflow-visible bg-white">
                    {Array.from({ length: 15 }, (_, k) => (
                      <g key={k}>
                        <text x={123.5 + 65 * k} y="107" textLength="27" fontSize="12" fill="#111" fontFamily="'Noto Sans', sans-serif">{(k / 10).toFixed(1)} s</text>
                        <rect x={138 + 65 * k} y="108" width="1" height="1" />
                      </g>
                    ))}
                  </svg>
                  <div className="flex h-[6px] items-center justify-center pr-[29px]"><div className={GRIP_H} /></div>
                  <div className="flex h-[929px] bg-white">
                    <TimelineChart />
                    <div className="flex h-[928px] w-[15px] flex-col">
                      <div className={`flex h-[15px] items-center justify-center rounded-t-[3px] ${SB}`}><svg width="7" height="4" viewBox="0 0 7 4"><path d="M0 4l3.500-4L7 4z" /></svg></div>
                      <div className="flex h-[716px] items-center justify-center border-x border-[#857f70] bg-[linear-gradient(90deg,#dedad2,#c9c4b8)]">
                        <div className="h-[8px] w-[7px] bg-[repeating-linear-gradient(180deg,#fff_0_1px,#a09a8c_1px_2px,transparent_2px_3px)]" />
                      </div>
                      <div className="flex-1 border border-[#857f70] bg-[#bfb7a4]" />
                      <div className={`flex h-[14px] items-center justify-center rounded-b-[3px] ${SB}`}><svg width="7" height="4" viewBox="0 0 7 4"><path d="M0 0h7L3.500 4z" /></svg></div>
                    </div>
                  </div>
                </div>
                <div className="ml-[3px] h-[949px] w-[2px] border-l border-r border-l-[#6b6a66] border-r-white" />
              </div>
              <div className="flex h-[15px]">
                <div className={`flex w-[15px] items-center justify-center rounded-l-[3px] ${SB}`}><svg width="4" height="7" viewBox="0 0 4 7"><path d="M4 0v7L0 3.500z" /></svg></div>
                <div className="flex flex-1 items-center justify-center border-y border-[#857f70] bg-[linear-gradient(#dedad2,#c9c4b8)]">
                  <div className="h-[7px] w-[8px] bg-[repeating-linear-gradient(90deg,#fff_0_1px,#a09a8c_1px_2px,transparent_2px_3px)]" />
                </div>
                <div className={`flex w-[15px] items-center justify-center rounded-r-[3px] ${SB}`}><svg width="4" height="7" viewBox="0 0 4 7"><path d="M0 0v7l4-3.500z" /></svg></div>
              </div>
            </section>

            <div className="flex w-[6px] justify-center pt-[468px]"><div className={`h-10 w-[4px] ${GRIP_V}`} /></div>

            {/* right docks */}
            <section className="flex w-[773px] flex-col">
              <DockTitle t="Function Summary" lead="w-[340px]" w="w-[94px]" />
              <SummaryChart />
              <div className="flex h-[6px] items-center justify-center"><div className={GRIP_H} /></div>
              <DockTitle t="Context View" lead="w-[351px]" w="w-[72px]" buttons />
              <div className="h-[360px]" />
              <div className="flex h-[6px] items-center justify-center"><div className={GRIP_H} /></div>
              <DockTitle t="Function Legend" lead="w-[345px]" w="w-[84px]" />
              <div className="h-[210px] border-2 border-b border-r border-[#9f9b90] bg-white pl-[10px]">
                {legend.map(([t, c]) => (
                  <div key={t} className="flex h-[14px] items-center leading-[14px]">
                    <div className="h-[14px] w-[10px]"><div className="h-[7px] w-[9px] border-b border-l border-dotted border-[#555]" />{t === "Application" && <div className="h-[7px] w-[9px] border-l border-dotted border-[#555]" />}</div>
                    <div className={`ml-[3px] h-[13px] w-[13px] border ${c}`} />
                    <div className="ml-[5px] text-[12px] tracking-[-0.2px]">{t}</div>
                  </div>
                ))}
              </div>
            </section>
          </div>
        </main>
      </div>
    </div>
  );
}
